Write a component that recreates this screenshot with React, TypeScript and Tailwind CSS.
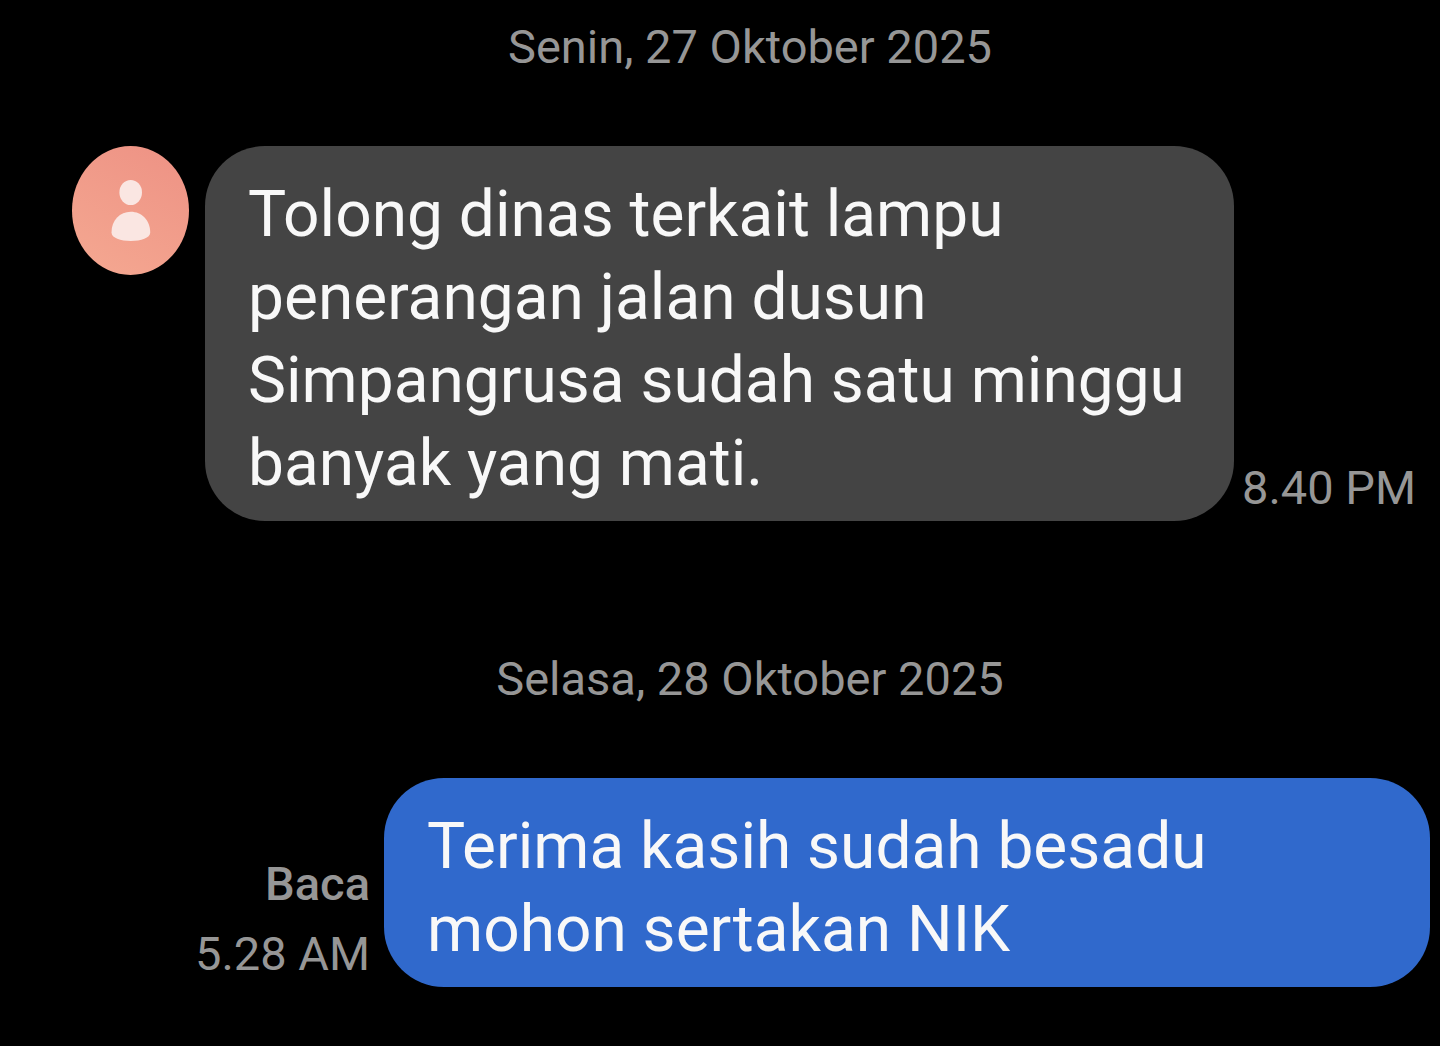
type DayProps = { label: string };

function DayDivider({ label }: DayProps) {
	return <h2 className="pl-[60px] text-center text-[47px] leading-[60px] text-[#969696]">{label}</h2>;
}

function Avatar() {
	return (
		<svg viewBox="0 0 117 129" className="h-[129px] w-[117px] shrink-0" role="img" aria-label="Kontak">
			<defs>
				<linearGradient id="avatar" x1="0.8" y1="0" x2="0.3" y2="1">
					<stop offset="0" stopColor="#ee9385" />
					<stop offset="1" stopColor="#f4a690" />
				</linearGradient>
			</defs>
			<ellipse cx="58.5" cy="64.5" rx="58.5" ry="64.5" fill="url(#avatar)" />
			<ellipse cx="58.7" cy="46.5" rx="11.3" ry="12.6" fill="#fae6e2" />
			<path d="M39.5 86.5C39.5 74 48 65.7 58.8 65.7S78.200 74 78.2 86.5C78.2 92 69 95 58.8 95S39.500 92 39.500 86.5z" fill="#fae6e2" />
		</svg>
	);
}

export default function App() {
	return (
		<main className="min-h-screen bg-black pt-[17px] pb-14 font-['Roboto',sans-serif]">
			<DayDivider label="Senin, 27 Oktober 2025" />
			<section className="mt-[69px] flex items-start pr-6 pl-[72px]">
				<Avatar />
				<p className="ml-4 min-w-0 flex-1 rounded-[60px] bg-[#444444] pt-[27px] pr-8 pb-4 pl-[43px] text-[64px] leading-[83px] text-[#f8f8f8]">
					Tolong dinas terkait lampu
					<br />
					penerangan jalan dusun
					<br />
					Simpangrusa sudah satu minggu
					<br />
					banyak yang mati.
				</p>
				<time className="ml-2 self-end text-[47px] leading-[66px] whitespace-nowrap text-[#969696]">8.40 PM</time>
			</section>
			<div className="mt-[128px]">
				<DayDivider label="Selasa, 28 Oktober 2025" />
			</div>
			<section className="mt-[69px] flex items-end pr-[10px] pl-[195px]">
				<div className="flex shrink-0 flex-col gap-1 text-right text-[47px] leading-[66px] text-[#969696]">
					<p className="font-medium">Baca</p>
					<time>5.28 AM</time>
				</div>
				<p className="ml-[14px] min-w-0 flex-1 rounded-[60px] bg-[#3069cc] pt-[27px] pr-8 pb-4 pl-[43px] text-[64px] leading-[83px] text-[#f8f8f8]">
					Terima kasih sudah besadu
					<br />
					mohon sertakan NIK
				</p>
			</section>
		</main>
	);
}
